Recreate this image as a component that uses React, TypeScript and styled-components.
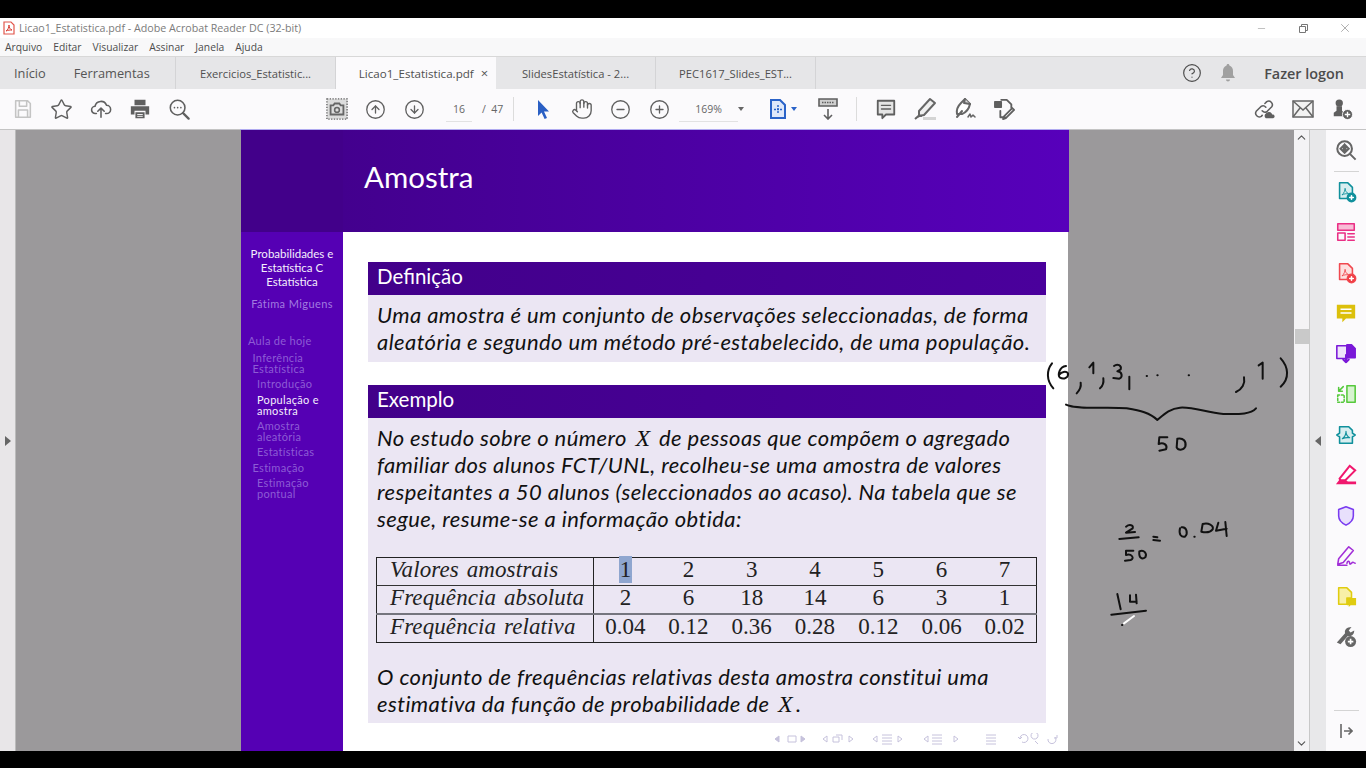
import { FC, ReactNode } from "react";
import styled, { createGlobalStyle } from "styled-components";
import {
  CircleArrowDown,
  CircleArrowUp,
  CircleMinus,
  CirclePlus,
  CircleHelp,
  Hand,
  Star,
  X,
  Minus,
  ChevronUp,
  ChevronDown,
} from "lucide-react";

const Global = createGlobalStyle`
  html, body { margin: 0; padding: 0; background: #000; overflow: hidden; }
  body { font-family: "Open Sans", "Liberation Sans", sans-serif; }
`;

const Screen = styled.div`
  width: 1366px;
  height: 768px;
  display: flex;
  flex-direction: column;
  background: #000;
  padding: 18px 0 17px;
  box-sizing: border-box;
`;

const TitleBar = styled.div`
  height: 20px;
  background: #fff;
  display: flex;
  align-items: center;
  padding-left: 3px;
  color: #7b7b7b;
  font-size: 10.7px;
`;

const TitleText = styled.span`
  margin-left: 4px;
  flex: 1;
`;

const WindowButton = styled.div`
  width: 42px;
  height: 20px;
  display: flex;
  align-items: center;
  justify-content: center;
  color: #777;
`;

const MenuBar = styled.div`
  height: 18px;
  background: #f8f8f9;
  display: flex;
  align-items: center;
  gap: 11px;
  padding-left: 5px;
  font-size: 10.3px;
  color: #4c4c4c;
  border-bottom: 1px solid #d8d8d8;
`;

const TabStrip = styled.div`
  height: 32px;
  background: #e6e6e8;
  display: flex;
  align-items: stretch;
  color: #555;
`;

const HomeTabs = styled.div`
  width: 176px;
  display: flex;
  align-items: center;
  gap: 28px;
  padding-left: 14px;
  box-sizing: border-box;
  font-size: 12.8px;
  border-right: 1px solid #d4d4d6;
`;

const DocTab = styled.div<{ $active?: boolean }>`
  width: 160px;
  display: flex;
  align-items: center;
  justify-content: center;
  gap: 7px;
  box-sizing: border-box;
  font-size: ${(p) => (p.$active ? 11.6 : 11.2)}px;
  color: #4f4f4f;
  padding-left: ${(p) => (p.$active ? 16 : 0)}px;
  background: ${(p) => (p.$active ? "#fbfafc" : "transparent")};
  border-right: 1px solid ${(p) => (p.$active ? "transparent" : "#d4d4d6")};
`;

const TabClose = styled.span`
  font-size: 13px;
  color: #555;
`;

const TabRight = styled.div`
  margin-left: auto;
  display: flex;
  align-items: center;
  padding-right: 22px;
  font-size: 14.4px;
  color: #4c4c4c;
`;

const LogonText = styled.span`
  margin-left: 27px;
  font-weight: 600;
`;

const Toolbar = styled.div`
  height: 41px;
  background: #fbfafc;
  display: flex;
  align-items: center;
  padding-left: 3px;
  color: #606060;
  border-bottom: 1px solid #bbb;
  border-image: linear-gradient(90deg, #c4c4c4 241px, #b0aaf0 241px, #b0aaf0 1068px, #c4c4c4 1068px) 1;
  box-sizing: border-box;
`;

const Tool = styled.div<{ $w?: number }>`
  width: ${(p) => p.$w ?? 39}px;
  height: 30px;
  flex: none;
  display: flex;
  align-items: center;
  justify-content: center;
`;

const Gap = styled.div<{ $w: number }>`
  width: ${(p) => p.$w}px;
  flex: none;
`;

const Rule = styled.div`
  width: 1px;
  height: 24px;
  background: #dcdcdc;
  flex: none;
`;

const NumBox = styled.div<{ $w: number }>`
  width: ${(p) => p.$w}px;
  height: 24px;
  flex: none;
  display: flex;
  align-items: center;
  justify-content: center;
  font-size: 10.5px;
  color: #666;
  border-bottom: 1px solid #e2e2e2;
`;

const PageCount = styled.span`
  font-size: 10.5px;
  color: #666;
  margin-left: 10px;
  width: 31px;
  flex: none;
  white-space: nowrap;
`;

const Caret = styled.span<{ $blue?: boolean }>`
  width: 0;
  height: 0;
  flex: none;
  border-left: 3px solid transparent;
  border-right: 3px solid transparent;
  border-top: 4px solid ${(p) => (p.$blue ? "#2a63c8" : "#666")};
`;

const Main = styled.div`
  flex: 1;
  min-height: 0;
  display: flex;
`;

const LeftEdge = styled.div`
  width: 16px;
  background: #e8e6e8;
  display: flex;
  align-items: center;
  justify-content: center;
  border-right: 1px solid #bbb;
  box-sizing: border-box;
`;

const Canvas = styled.div`
  width: 1278px;
  position: relative;
  background: #9b999b;
  overflow: hidden;
  padding-left: 225px;
  display: flex;
  box-sizing: border-box;
`;

const Slide = styled.div`
  width: 827px;
  flex: none;
  display: grid;
  grid-template-columns: 102px 1fr;
  grid-template-rows: 102px 1fr;
  background: #fff;
  font-family: "Lato", "Open Sans", sans-serif;
`;

const HeadCorner = styled.div`
  background: #42008a;
`;

const HeadBar = styled.div`
  background: linear-gradient(90deg, #43008e, #5700bb);
  color: #fff;
  font-size: 29.5px;
  display: flex;
  align-items: center;
  padding: 0 0 10px 21px;
`;

const Sidebar = styled.div`
  background: #5500b4;
  padding-top: 15px;
  font-size: 11px;
  line-height: 11px;
  color: #8d5cd4;
`;

const SideTitle = styled.div`
  text-align: center;
  color: #f4eefc;
  font-size: 11.5px;
  line-height: 14px;
`;

const SideAuthor = styled.div`
  text-align: center;
  margin: 8px 0 24px;
  line-height: 14px;
  letter-spacing: 0.4px;
  color: #a27ce0;
`;

const SideItem = styled.div<{ $level: number; $on?: boolean; $top?: number }>`
  padding-left: ${(p) => 7 + p.$level * 4.5}px;
  margin-top: ${(p) => p.$top ?? 4}px;
  color: ${(p) => (p.$on ? "#f4eefc" : "#8d5cd4")};
  letter-spacing: 0.3px;
`;

const Content = styled.div`
  position: relative;
  padding: 30px 23px 0 25px;
  display: flex;
  flex-direction: column;
`;

const BlockHead = styled.div`
  height: 33px;
  background: linear-gradient(90deg, #42008a, #4a009c);
  color: #fff;
  font-size: 20.5px;
  display: flex;
  align-items: center;
  padding: 0 0 5px 9px;
  box-sizing: border-box;
`;

const BlockBody = styled.div<{ $h: number }>`
  height: ${(p) => p.$h}px;
  background: #ebe6f3;
  padding: 6px 9px 0;
  box-sizing: border-box;
  margin-bottom: 23px;
`;

const Para = styled.p`
  margin: 0;
  height: 27px;
  font-size: 22px;
  line-height: 27px;
  letter-spacing: 0.42px;
  font-style: italic;
  color: #111;
  white-space: nowrap;
`;

const MathVar = styled.span`
  font-family: "Liberation Serif", serif;
  font-size: 24px;
  line-height: 1;
  margin: 0 3px;
`;

const FreqTable = styled.table`
  border-collapse: collapse;
  margin: 25px 0 20px -1px;
  width: 661px;
  table-layout: fixed;
  font-family: "Liberation Serif", serif;
  font-size: 23px;
  line-height: 24px;
  color: #222;
  border: 1px solid #222;
`;

const Row = styled.tr<{ $thick?: boolean }>`
  height: 28px;
  border-bottom: ${(p) => (p.$thick ? "2px solid #75757e" : "1px solid #333")};
  &:last-child { border-bottom: none; }
`;

const HeadCell = styled.td`
  padding: 0 0 3px 13px;
  box-sizing: border-box;
  font-style: italic;
  letter-spacing: 0.1px;
  word-spacing: 2px;
  border-right: 1px solid #222;
  white-space: nowrap;
`;

const Cell = styled.td`
  text-align: center;
  padding: 0 0 3px;
`;

const Picked = styled.span`
  background: #8fa6cf;
  padding: 1px;
`;

const NavSymbols = styled.svg`
  position: absolute;
  left: 431px;
  bottom: 6px;
`;

const InkLayer = styled.svg`
  position: absolute;
  left: 1024px;
  top: 210px;
  pointer-events: none;
`;

const Scrollbar = styled.div`
  width: 15px;
  background: #f4f3f5;
  display: flex;
  flex-direction: column;
  align-items: center;
  justify-content: space-between;
  padding: 1px 0;
  position: relative;
  color: #555;
  border-right: 1px solid #c8c8c8;
`;

const Thumb = styled.div`
  position: absolute;
  left: 1px;
  top: 199px;
  width: 14px;
  height: 15px;
  background: #c9c9c9;
`;

const CollapsePane = styled.div`
  width: 16px;
  background: #e8e8ea;
  display: flex;
  align-items: center;
  justify-content: center;
`;

const ToolRail = styled.div`
  width: 40px;
  background: #fbfafc;
  display: flex;
  flex-direction: column;
  align-items: center;
`;

const RailIcon = styled.div`
  height: 40.5px;
  width: 40px;
  flex: none;
  display: flex;
  align-items: center;
  justify-content: center;
`;

const RailRule = styled.div`
  width: 25px;
  height: 1px;
  background: #d4d4d4;
  flex: none;
`;

const RailSpacer = styled.div`
  flex: 1;
`;

const Triangle = styled.span<{ $dir: "left" | "right" }>`
  width: 0;
  height: 0;
  border-top: 5px solid transparent;
  border-bottom: 5px solid transparent;
  ${(p) => (p.$dir === "left" ? "border-right: 6px solid #666;" : "border-left: 6px solid #666;")}
`;

const Ico: FC<{ size?: number; children: ReactNode; color?: string }> = ({ size = 22, children, color = "#5f5f5f" }) => (
  <svg width={size} height={size} viewBox="0 0 24 24" fill="none" stroke={color} strokeWidth={1.7} strokeLinecap="round" strokeLinejoin="round">
    {children}
  </svg>
);

const docPath = "M5 2h9l5 5v12H5z";

const rows = [
  { label: "Valores amostrais", values: ["1", "2", "3", "4", "5", "6", "7"] },
  { label: "Frequência absoluta", values: ["2", "6", "18", "14", "6", "3", "1"] },
  { label: "Frequência relativa", values: ["0.04", "0.12", "0.36", "0.28", "0.12", "0.06", "0.02"] },
];

const App: FC = () => {
  return (
    <Screen>
      <Global />
      <TitleBar>
        <svg width="12" height="14" viewBox="0 0 12 14">
          <path d="M1 1h7l3 3v9H1z" fill="#fff" stroke="#e2574c" strokeWidth="1.2" />
          <path d="M3 10c2-1 3-4 3-6 0 3 1 4 3 5-2 0-4 0-6 1z" fill="none" stroke="#d83a30" strokeWidth="1" />
        </svg>
        <TitleText>Licao1_Estatistica.pdf - Adobe Acrobat Reader DC (32-bit)</TitleText>
        <WindowButton><Minus size={11} strokeWidth={1} /></WindowButton>
        <WindowButton>
          <svg width="11" height="11" viewBox="0 0 11 11" fill="none" stroke="#777"><path d="M1.500 3.500h6v6h-6zM3.500 3.500v-2h6v6h-2" /></svg>
        </WindowButton>
        <WindowButton><X size={14} strokeWidth={1} /></WindowButton>
      </TitleBar>

      <MenuBar>
        <span>Arquivo</span>
        <span>Editar</span>
        <span>Visualizar</span>
        <span>Assinar</span>
        <span>Janela</span>
        <span>Ajuda</span>
      </MenuBar>

      <TabStrip>
        <HomeTabs>
          <span>Início</span>
          <span>Ferramentas</span>
        </HomeTabs>
        <DocTab>Exercicios_Estatistic...</DocTab>
        <DocTab $active>
          Licao1_Estatistica.pdf <TabClose>×</TabClose>
        </DocTab>
        <DocTab>SlidesEstatística - 2...</DocTab>
        <DocTab>PEC1617_Slides_EST...</DocTab>
        <TabRight>
          <CircleHelp size={20} strokeWidth={1.4} />
          <Gap $w={17} />
          <svg width="18" height="20" viewBox="0 0 18 20" fill="#a0a0a0">
            <path d="M9 1c1 0 1.400.7 1.400 1.500C13 3.400 14 5.500 14 8v4l2 3H2l2-3V8c0-2.500 1-4.600 3.600-5.500C7.600 1.700 8 1 9 1zM7 16.500h4c0 1.300-.9 2-2 2s-2-.7-2-2z" />
          </svg>
          <LogonText>Fazer logon</LogonText>
        </TabRight>
      </TabStrip>

      <Toolbar>
        <Tool>
          <Ico color="#c4c4c4"><path d="M4 3h13l3 3v15H4zM8 3v6h8V3M7 21v-8h10v8" /></Ico>
        </Tool>
        <Tool><Star size={23} strokeWidth={1.5} /></Tool>
        <Tool>
          <Ico><path d="M7 17H6a4 4 0 0 1-.5-8 6.500 6.500 0 0 1 12.500-1 4.500 4.500 0 0 1 0 9h-1M12 21V11M8.500 14.500 12 11l3.500 3.500" /></Ico>
        </Tool>
        <Tool>
          <svg width="22" height="22" viewBox="0 0 24 24" fill="#5f5f5f">
            <path d="M6 2h12v6H6zM2 9h20v9h-4v-4H6v4H2zM7 15.500h10V22H7z" />
            <path d="M9 18h6M9 20h6" stroke="#fbfafc" />
          </svg>
        </Tool>
        <Tool>
          <Ico>
            <circle cx="10.500" cy="10.500" r="8" />
            <path d="m16.500 16.500 6 6" strokeWidth="2.400" />
            <path d="M7 10.500h.1M10.500 10.500h.1M14 10.500h.1" />
          </Ico>
        </Tool>
        <Gap $w={119} />
        <Tool>
          <svg width="22" height="22" viewBox="0 0 24 24" fill="#dcdcdc" stroke="#666" strokeWidth="1.500">
            <path d="M1 1h22v22H1z" strokeDasharray="1.500 1.500" />
            <path d="M5 8h3l1.500-2h5L16 8h3v10H5z" fill="none" strokeWidth="2" />
            <circle cx="12" cy="13" r="2.600" fill="none" strokeWidth="1.700" />
          </svg>
        </Tool>
        <Tool><CircleArrowUp size={21} strokeWidth={1.5} /></Tool>
        <Tool><CircleArrowDown size={21} strokeWidth={1.5} /></Tool>
        <Gap $w={12} />
        <NumBox $w={26}>16</NumBox>
        <PageCount>/ &nbsp;47</PageCount>
        <Rule />
        <Gap $w={9} />
        <Tool>
          <svg width="20" height="20" viewBox="0 0 20 20" fill="#2a5fc4"><path d="M5 1l11 11.500h-5l3 6.500-2.400 1-3-6.500L5 17z" /></svg>
        </Tool>
        <Tool><Hand size={22} strokeWidth={1.5} /></Tool>
        <Tool><CircleMinus size={21} strokeWidth={1.5} /></Tool>
        <Tool><CirclePlus size={21} strokeWidth={1.5} /></Tool>
        <NumBox $w={59}>169%</NumBox>
        <Caret />
        <Gap $w={21} />
        <Tool $w={26}>
          <svg width="18" height="20" viewBox="0 0 18 20" fill="none" stroke="#2a63c8" strokeWidth="2">
            <path d="M2 1h9l5 5v13H2z" fill="#dfe8fa" />
            <path d="M9 6v9M5 10.500h8" strokeWidth="1.500" strokeDasharray="2 1" />
          </svg>
        </Tool>
        <Caret $blue />
        <Gap $w={11} />
        <Tool>
          <svg width="20" height="22" viewBox="0 0 20 22" fill="none" stroke="#5f5f5f" strokeWidth="1.600">
            <path d="M1 1h18v7H1z" fill="#cfcfcf" />
            <path d="M4 4.500h12" strokeDasharray="1.500 1" />
            <path d="M10 11v10M6 17l4 4 4-4" />
          </svg>
        </Tool>
        <Gap $w={9} />
        <Rule />
        <Gap $w={9} />
        <Tool>
          <Ico><path d="M3 3h18v15h-9l-4 4v-4H3z" fill="#e4e4e4" strokeWidth="2" /><path d="M7 8h10M7 12h10" strokeWidth="1.400" /></Ico>
        </Tool>
        <Tool $w={40}>
          <svg width="24" height="24" viewBox="0 0 24 24" fill="#efefef" stroke="#666" strokeWidth="2" strokeLinejoin="round">
            <path d="M17 2l5 4-11 12-5 1 0-5z" />
            <path d="M2 22l4-3.500 3 .5" fill="#666" />
            <path d="M10 21.500h13" stroke="#d4d4d4" strokeWidth="3" />
          </svg>
        </Tool>
        <Tool>
          <svg width="24" height="24" viewBox="0 0 24 24" fill="#fff" stroke="#666" strokeWidth="2" strokeLinejoin="round" strokeLinecap="round">
            <path d="M12 2l5 5c-1 5-3 8-8 10H4c-1-5 2-9 4-11z" />
            <path d="M12 2l-1 4 6 1" fill="#d8d8d8" />
            <path d="M4 20l5-6" />
            <path d="M15 20l2-3 1 3 2-2 2 2" strokeWidth="1.500" fill="none" />
          </svg>
        </Tool>
        <Tool>
          <Ico><path d="M2 4h7v6H2z" fill="#5f5f5f" /><path d="M9 2h6l5 5v4M8 14v7h5M21 11l2 2-9 9-3 1 1-3z" strokeWidth="2" /></Ico>
        </Tool>
        <Gap $w={221} />
        <Tool>
          <Ico>
            <path d="M10 14a4 4 0 0 0 5.500.5l5-5a4 4 0 0 0-5.500-5.500l-2 2M14 10a4 4 0 0 0-5.500-.5l-5 5a4 4 0 0 0 5.500 5.500l1-1" />
            <path d="M14 22a3 3 0 0 1 0-5 4 4 0 0 1 7 1 2 2 0 0 1 1 4z" fill="#5f5f5f" stroke="none" />
          </Ico>
        </Tool>
        <Tool>
          <svg width="22" height="18" viewBox="0 0 22 18" fill="#f2f2f2" stroke="#666" strokeWidth="1.500">
            <path d="M1 1h20v16H1z" />
            <path d="M1 1l10 9 10-9M1 17l7-9M21 17l-7-9" fill="none" />
          </svg>
        </Tool>
        <Tool>
          <svg width="22" height="22" viewBox="0 0 24 24" fill="#5f5f5f">
            <circle cx="9" cy="5.500" r="4" />
            <path d="M6 9h6v5l2 2v4H3v-4l3-2z" />
            <circle cx="18" cy="18" r="5.500" stroke="#fbfafc" />
            <path d="M18 15v6M15 18h6" stroke="#fff" strokeWidth="1.500" />
          </svg>
        </Tool>
      </Toolbar>

      <Main>
        <LeftEdge><Triangle $dir="right" /></LeftEdge>
        <Canvas>
          <Slide>
            <HeadCorner />
            <HeadBar>Amostra</HeadBar>
            <Sidebar>
              <SideTitle>Probabilidades e<br />Estatística C<br />Estatística</SideTitle>
              <SideAuthor>Fátima Miguens</SideAuthor>
              <SideItem $level={0} $top={0}>Aula de hoje</SideItem>
              <SideItem $level={1} $top={6}>Inferência<br />Estatística</SideItem>
              <SideItem $level={2}>Introdução</SideItem>
              <SideItem $level={2} $on $top={5}>População e<br />amostra</SideItem>
              <SideItem $level={2}>Amostra<br />aleatória</SideItem>
              <SideItem $level={2}>Estatísticas</SideItem>
              <SideItem $level={1} $top={5}>Estimação</SideItem>
              <SideItem $level={2}>Estimação<br />pontual</SideItem>
            </Sidebar>
            <Content>
              <BlockHead>Definição</BlockHead>
              <BlockBody $h={67}>
                <Para>Uma amostra é um conjunto de observações seleccionadas, de forma</Para>
                <Para>aleatória e segundo um método pré-estabelecido, de uma população.</Para>
              </BlockBody>
              <BlockHead>Exemplo</BlockHead>
              <BlockBody $h={305}>
                <Para>No estudo sobre o número <MathVar>X</MathVar> de pessoas que compõem o agregado</Para>
                <Para>familiar dos alunos FCT/UNL, recolheu-se uma amostra de valores</Para>
                <Para>respeitantes a 50 alunos (seleccionados ao acaso). Na tabela que se</Para>
                <Para>segue, resume-se a informação obtida:</Para>
                <FreqTable>
                  <colgroup>
                    <col style={{ width: 217 }} />
                  </colgroup>
                  <tbody>
                    {rows.map((row, i) => (
                      <Row key={row.label} $thick={i === 1}>
                        <HeadCell>{row.label}</HeadCell>
                        {row.values.map((v, j) => (
                          <Cell key={j}>{i === 0 && j === 0 ? <Picked>{v}</Picked> : v}</Cell>
                        ))}
                      </Row>
                    ))}
                  </tbody>
                </FreqTable>
                <Para>O conjunto de frequências relativas desta amostra constitui uma</Para>
                <Para>estimativa da função de probabilidade de <MathVar>X</MathVar>.</Para>
              </BlockBody>
              <NavSymbols width="290" height="12" viewBox="0 0 290 12" fill="none" stroke="#c6c2dc" strokeWidth="1">
                <path d="M5 3 1 6l4 3zM27 3l4 3-4 3z" fill="#c6c2dc" />
                <path d="M14 3h8v6h-8z" />
                <path d="M53 3l-4 3 4 3zM59 4h6v5h-6zM62 2h6v5M75 3l4 3-4 3z" />
                <path d="M103 3l-4 3 4 3zM108 2h10M108 5h10M108 8h10M108 11h10M124 3l4 3-4 3z" />
                <path d="M154 3l-4 3 4 3zM158 2h10M158 5h10M158 8h10M158 11h10M180 3l4 3-4 3z" />
                <path d="M212 2h10M212 5h10M212 8h10M212 11h10" />
                <path d="M246 6a4 4 0 1 1 2 3M244 4l2 2 2-2M258 5a3.500 3.500 0 1 1 .1.100M261 8l3 3M274 6a4 4 0 1 0 7-2M283 2v3h-3" />
              </NavSymbols>
            </Content>
          </Slide>
          <InkLayer width="260" height="300" viewBox="0 0 780 900" fill="none" stroke="#111" strokeWidth="6" strokeLinecap="round" strokeLinejoin="round">
            <path d="M36 70C20 90 18 120 40 145" />
            <path d="M78 78C58 80 52 105 60 113 72 120 86 112 84 100 78 92 64 96 58 104" />
            <path d="M122 128C124 140 120 150 110 160" />
            <path d="M148 82 160 68V100" />
            <path d="M190 115C192 130 188 138 180 145" />
            <path d="M222 78C232 70 246 76 242 88L232 94C248 96 248 112 238 116L220 114" />
            <path d="M268 110V148" />
            <path d="M320 108h1M352 106h1M446 106h1" />
            <path d="M612 112C616 130 606 148 588 156" />
            <path d="M656 76 668 68V116" />
            <path d="M722 55C745 80 750 115 722 140" />
            <path d="M78 194C110 210 200 200 260 205 300 212 330 218 352 240 370 225 390 205 420 203 460 200 500 218 550 222 590 222 630 225 648 205" />
            <path d="M382 292H358L356 312C370 305 384 315 378 328L358 332" />
            <path d="M412 296C430 292 440 305 436 320 430 332 414 332 410 322Z" />
            <path d="M258 560C268 552 282 555 278 565L258 578 285 576" />
            <path d="M238 597 296 592" />
            <path d="M280 632H258V645C275 640 285 655 272 660L255 662" />
            <path d="M298 634C312 628 322 640 316 652 306 660 296 654 298 634Z" />
            <path d="M340 590 352 592M340 600 360 602" />
            <path d="M420 565C415 585 425 592 435 590 445 580 440 560 425 562" />
            <path d="M463 590h1" />
            <path d="M488 552C505 548 522 555 518 568 510 578 495 578 484 575L488 552" />
            <path d="M535 548 528 572 560 566M556 546 560 588" />
            <path d="M232 762 242 808" />
            <path d="M270 766V785H290M288 764 290 790" />
            <path d="M214 824 318 812" />
            <path d="M252 850 282 828" stroke="#fff" />
            <path d="M246 855h1" />
          </InkLayer>
        </Canvas>
        <Scrollbar>
          <ChevronUp size={13} />
          <Thumb />
          <ChevronDown size={13} />
        </Scrollbar>
        <CollapsePane><Triangle $dir="left" /></CollapsePane>
        <ToolRail>
          <RailIcon>
            <svg width="22" height="22" viewBox="0 0 24 24" fill="none" stroke="#666" strokeWidth="2.200">
              <circle cx="10.500" cy="10.500" r="8" />
              <path d="m16.500 16.500 6 6M9.500 7v7L6 10.500zM11.500 7v7l3.500-3.500z" />
            </svg>
          </RailIcon>
          <RailRule />
          <RailIcon>
            <Ico color="#10909c"><path d={docPath} fill="#d8eef0" /><path d="M8 15c2-2 3-5 3-7 0 3 2 5 4 6-3-.4-5 0-7 1z" strokeWidth="1" /><circle cx="18" cy="18" r="4.500" fill="#10909c" /><path d="M18 16v4M16 18h4" stroke="#fff" /></Ico>
          </RailIcon>
          <RailIcon>
            <Ico color="#ea2f85"><path d="M3 3h18v7H3z" fill="#f8bcd6" /><path d="M3 13h8v8H3zM14 14h7M14 17.500h7M14 21h7" /></Ico>
          </RailIcon>
          <RailIcon>
            <Ico color="#f0484f"><path d={docPath} fill="#fde0e0" /><path d="M8 15c2-2 3-5 3-7 0 3 2 5 4 6-3-.4-5 0-7 1z" strokeWidth="1" /><circle cx="18" cy="18" r="4.500" fill="#f0383f" /><path d="M18 16v4M16 18h4" stroke="#fff" /></Ico>
          </RailIcon>
          <RailIcon>
            <svg width="22" height="22" viewBox="0 0 24 24" fill="#dcc00c"><path d="M2 3h20v15H12l-4 4v-4H2z" /><path d="M6 8h12M6 12h12" stroke="#fff" strokeWidth="1.700" /></svg>
          </RailIcon>
          <RailIcon>
            <Ico color="#7a18d8"><path d="M2 3h11v14H2z" fill="#efe4fb" /><path d="M13 2h5l4 4v10h-9z" fill="#7a18d8" /><path d="M12 13v8M9 18l3 3 3-3" strokeWidth="2.200" /></Ico>
          </RailIcon>
          <RailIcon>
            <Ico color="#56c93c"><path d="M13 3h9v18h-9z" fill="#d7f3d0" /><path d="M3 13h7v8H3z" strokeDasharray="2 2" /><path d="M9 4 4 9M4 5v4h4" /></Ico>
          </RailIcon>
          <RailIcon>
            <Ico color="#10909c"><path d="M5 3h10l4 4v3l3 2-3 2v7H5v-7l-3-2 3-2z" fill="#d8eef0" /><path d="M8 16c3-2 4-5 4-8 0 3 2 6 4 7-3-.4-6 0-8 1z" strokeWidth="1.200" /></Ico>
          </RailIcon>
          <RailIcon>
            <svg width="22" height="22" viewBox="0 0 24 24" fill="#f0186e"><path d="M16 2l6 5-11 11H6l-1-2z" fill="#fff" stroke="#f0186e" strokeWidth="2.200" /><path d="M1 22l4-5h6l3 2h9v3z" /></svg>
          </RailIcon>
          <RailIcon>
            <Ico color="#7a3cf0"><path d="M12 2 20 5v7c0 5-4 8-8 10-4-2-8-5-8-10V5z" fill="#e8e0fc" /></Ico>
          </RailIcon>
          <RailIcon>
            <Ico color="#a22fd8"><path d="M15 2l5 4L9 19l-6 2 1-6zM3 22h10M13 20c1-4 3-2 3 0s2 0 3-1 2 1 3 1" /></Ico>
          </RailIcon>
          <RailIcon>
            <Ico color="#e0cc10"><path d="M4 2h9l5 5v6h-5v7H4z" fill="#f8f0a8" /><path d="M13 13h10v8h-6l-2 2v-2h-2z" fill="#e0cc10" stroke="none" /></Ico>
          </RailIcon>
          <RailIcon>
            <svg width="22" height="22" viewBox="0 0 24 24" fill="#666">
              <path d="M2 18 11 8c-1-4 2-7 7-7l-3 4 2 2 4-2c0 5-4 7-7 6l-8 9z" />
              <circle cx="17" cy="17" r="6" />
              <path d="M17 14v6M14 17h6" stroke="#fff" strokeWidth="1.800" />
            </svg>
          </RailIcon>
          <RailSpacer />
          <RailRule />
          <RailIcon>
            <svg width="14" height="16" viewBox="0 0 14 16" fill="none" stroke="#666" strokeWidth="1.600"><path d="M2 1v14M5 8h8M9.500 4.500 13 8l-3.500 3.500" /></svg>
          </RailIcon>
        </ToolRail>
      </Main>
    </Screen>
  );
};

export default App;
